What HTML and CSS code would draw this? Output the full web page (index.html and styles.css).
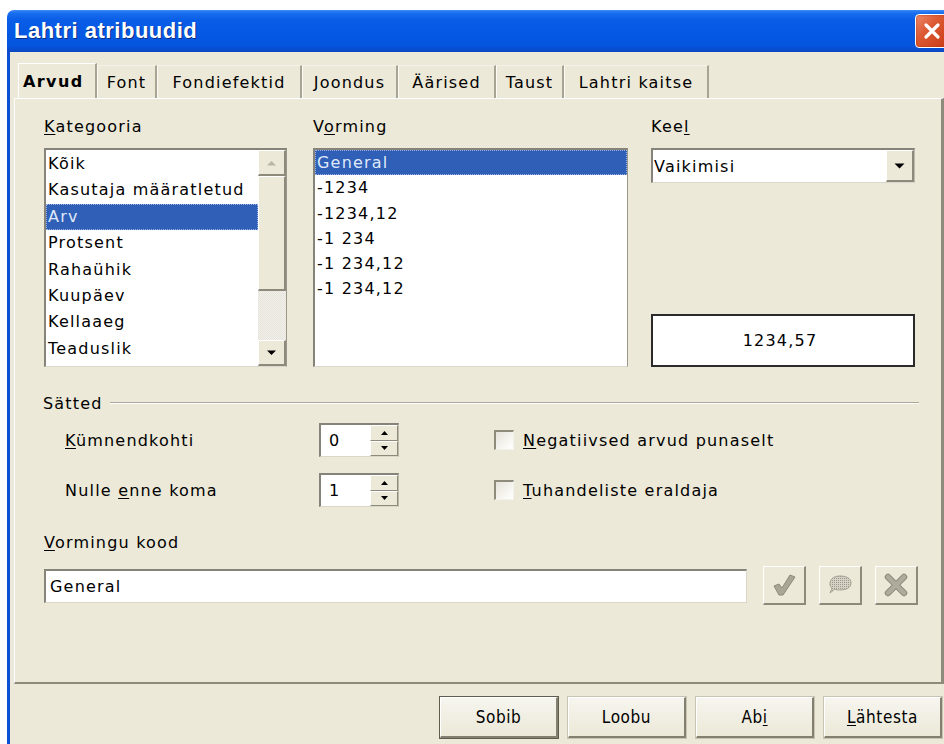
FILE: index.html
```html
<!DOCTYPE html>
<html lang="et">
<head>
<meta charset="utf-8">
<title>Lahtri atribuudid</title>
<link rel="stylesheet" href="styles.css">
</head>
<body>
<div class="window">
  <div class="titlebar">
    <span class="title">Lahtri atribuudid</span>
    <span class="close-btn" aria-label="Sulge">
      <svg width="22" height="22" viewBox="0 0 22 22"><path d="M5 5 L17 17 M17 5 L5 17" stroke="#fff" stroke-width="3.2" stroke-linecap="round"/></svg>
    </span>
  </div>

  <div class="client">
    <div class="tabs">
      <div class="tab active">Arvud</div>
      <div class="tab">Font</div>
      <div class="tab">Fondiefektid</div>
      <div class="tab">Joondus</div>
      <div class="tab">Äärised</div>
      <div class="tab">Taust</div>
      <div class="tab">Lahtri kaitse</div>
    </div>

    <div class="panel">
      <div class="top-row">
        <div class="col col-cat">
          <div class="label"><u>K</u>ategooria</div>
          <div class="listbox">
            <ul class="items rows-cat">
              <li>Kõik</li>
              <li>Kasutaja määratletud</li>
              <li class="sel">Arv</li>
              <li>Protsent</li>
              <li>Rahaühik</li>
              <li>Kuupäev</li>
              <li>Kellaaeg</li>
              <li>Teaduslik</li>
            </ul>
            <div class="vscroll">
              <div class="sb-btn">
                <svg width="11" height="6" viewBox="0 0 11 6"><path d="M1 5.5 L5.5 1 L10 5.5 Z" fill="#b9b6a8"/></svg>
              </div>
              <div class="sb-track"><div class="sb-thumb"></div></div>
              <div class="sb-btn">
                <svg width="11" height="6" viewBox="0 0 11 6"><path d="M1 0.5 L5.5 5 L10 0.5 Z" fill="#000"/></svg>
              </div>
            </div>
          </div>
        </div>

        <div class="col col-fmt">
          <div class="label">V<u>o</u>rming</div>
          <div class="listbox">
            <ul class="items rows-fmt">
              <li class="sel">General</li>
              <li>-1234</li>
              <li>-1234,12</li>
              <li>-1 234</li>
              <li>-1 234,12</li>
              <li>-1 234,12</li>
            </ul>
          </div>
        </div>

        <div class="col col-lang">
          <div class="label">Kee<u>l</u></div>
          <div class="combo">
            <span class="combo-val">Vaikimisi</span>
            <span class="combo-btn">
              <svg width="11" height="6" viewBox="0 0 11 6"><path d="M0.5 0.5 L5.5 5.5 L10.5 0.5 Z" fill="#000"/></svg>
            </span>
          </div>
          <div class="preview">1234,57</div>
        </div>
      </div>

      <div class="group-head">
        <span class="group-title">Sätted</span>
        <span class="rule"></span>
      </div>

      <div class="settings">
        <span class="set-label"><u>K</u>ümnendkohti</span>
        <div class="spin">
          <span class="spin-val">0</span>
          <span class="spin-btns">
            <span class="spin-b"><svg width="7" height="4" viewBox="0 0 7 4"><path d="M0 4 L3.5 0 L7 4 Z" fill="#000"/></svg></span>
            <span class="spin-b"><svg width="7" height="4" viewBox="0 0 7 4"><path d="M0 0 L3.5 4 L7 0 Z" fill="#000"/></svg></span>
          </span>
        </div>
        <label class="check"><span class="box"></span><span><u>N</u>egatiivsed arvud punaselt</span></label>

        <span class="set-label">Nulle <u>e</u>nne koma</span>
        <div class="spin">
          <span class="spin-val">1</span>
          <span class="spin-btns">
            <span class="spin-b"><svg width="7" height="4" viewBox="0 0 7 4"><path d="M0 4 L3.5 0 L7 4 Z" fill="#000"/></svg></span>
            <span class="spin-b"><svg width="7" height="4" viewBox="0 0 7 4"><path d="M0 0 L3.5 4 L7 0 Z" fill="#000"/></svg></span>
          </span>
        </div>
        <label class="check"><span class="box"></span><span><u>T</u>uhandeliste eraldaja</span></label>
      </div>

      <div class="label label-code"><u>V</u>ormingu kood</div>
      <div class="code-row">
        <div class="code-input">General</div>
        <span class="tool-btn">
          <svg width="26" height="26" viewBox="0 0 26 26">
            <path d="M3 14 L8 12 L11 16 L19 3 L24 5 L12 23 L8 23 Z" fill="#a9a696" stroke="#8d8a7b" stroke-width="1" stroke-linejoin="round"/>
          </svg>
        </span>
        <span class="tool-btn">
          <svg width="28" height="26" viewBox="0 0 28 26">
            <defs>
              <pattern id="dots" width="2" height="2" patternUnits="userSpaceOnUse">
                <rect width="2" height="2" fill="#d6d3c6"/>
                <rect width="1" height="1" fill="#9c998a"/>
              </pattern>
            </defs>
            <path d="M4 12 C4 6 9 4 14 4 C20 4 25 6 25 11 C25 16 20 18 14 18 C12 18 10 18 9 17 L4 21 L6 16 C4.5 15 4 14 4 12 Z" fill="url(#dots)" stroke="#a5a293" stroke-width="1"/>
          </svg>
        </span>
        <span class="tool-btn">
          <svg width="26" height="26" viewBox="0 0 26 26">
            <path d="M5 5 L21 21 M21 5 L5 21" stroke="#8f8c7d" stroke-width="6.5" stroke-linecap="round"/>
            <path d="M5 5 L21 21 M21 5 L5 21" stroke="#aeab9c" stroke-width="4.5" stroke-linecap="round"/>
          </svg>
        </span>
      </div>
    </div>

    <div class="footer">
      <span class="btn default">Sobib</span>
      <span class="btn">Loobu</span>
      <span class="btn">Ab<u>i</u></span>
      <span class="btn"><u>L</u>ähtesta</span>
    </div>
  </div>
</div>
</body>
</html>
```

FILE: styles.css
```css
* {
  box-sizing: border-box;
}

html,
body {
  margin: 0;
  height: 100%;
}

body {
  background: #fff;
  overflow: hidden;
  font-family: "DejaVu Sans", "Noto Sans", sans-serif;
  font-size: 16px;
  letter-spacing: 1.2px;
  color: #000;
}

u {
  text-decoration: underline;
  text-underline-offset: 2px;
}

/* ---- window frame ---- */
.window {
  margin: 10px 0 0 7px;
  width: 952px;
  height: 740px;
  display: flex;
  flex-direction: column;
}

.titlebar {
  flex: none;
  height: 42px;
  display: flex;
  align-items: center;
  padding: 0 11px 0 7px;
  border-radius: 7px 0 0 0;
  background: linear-gradient(to bottom,
    #3d8bf5 0%, #1a6ef0 7%, #085ce6 25%, #0458e4 60%,
    #0555de 85%, #0a47c2 100%);
}

.title {
  font-family: "Liberation Sans", Arial, sans-serif;
  font-weight: bold;
  font-size: 22px;
  letter-spacing: 0.5px;
  color: #fff;
  text-shadow: 1px 1px 0 #0b2f86;
}

.close-btn {
  margin-left: auto;
  width: 33px;
  height: 34px;
  display: flex;
  align-items: center;
  justify-content: center;
  border: 1px solid #fff;
  border-radius: 4px;
  background: linear-gradient(135deg, #eb8a6b 0%, #dd5a33 40%, #c93c17 100%);
  box-shadow: inset 0 0 2px #a82a0c;
}

.client {
  flex: 1;
  background: #ece9d8;
  border-left: 3px solid #0b4fd4;
  padding: 11px 0 0 4px;
  display: flex;
  flex-direction: column;
}

/* ---- tab strip ---- */
.tabs {
  display: grid;
  grid-template-columns: 79px 60px 145px 96px 98px 68px 145px;
  height: 35px;
  margin-left: 4px;
}

.tab {
  margin-top: 2px;
  display: flex;
  align-items: center;
  justify-content: center;
  border-left: 1px solid #fbfaf6;
  border-right: 2px solid #a7a494;
  border-top: 1px solid #f3f1e8;
  white-space: nowrap;
  letter-spacing: 1.2px;
}

.tab.active {
  margin-top: 0;
  font-weight: bold;
  letter-spacing: 1.4px;
  justify-content: flex-start;
  padding-left: 4px;
  border-left: 1px solid #fff;
  border-top: 1px solid #fff;
}

/* ---- tab page ---- */
.panel {
  width: 930px;
  height: 586px;
  border-top: 1px solid #fff;
  border-left: 1px solid #fff;
  border-right: 3px solid #8e8b7d;
  border-bottom: 2px solid #8e8b7d;
  padding: 18px 0 0 29px;
}

.label {
  height: 20px;
  line-height: 20px;
  margin-bottom: 11px;
  white-space: nowrap;
}

.top-row {
  display: flex;
  align-items: stretch;
}

.col {
  display: flex;
  flex-direction: column;
}

.col-cat {
  width: 243px;
}

.col-fmt {
  width: 315px;
  margin-left: 26px;
}

.col-lang {
  width: 264px;
  margin-left: 23px;
}

.listbox {
  height: 219px;
  display: flex;
  background: #fff;
  border-top: 2px solid #86837a;
  border-left: 2px solid #86837a;
  border-bottom: 1px solid #d9d6ca;
  border-right: 1px solid #9a978a;
}

.items {
  flex: 1;
  list-style: none;
  margin: 0;
  padding: 1px 0 0 0;
  white-space: nowrap;
}

.items li {
  padding-left: 2px;
}

.rows-cat li {
  height: 26.4px;
  line-height: 26.4px;
}

.rows-fmt {
  padding-top: 0;
}

.rows-fmt li {
  height: 25.3px;
  line-height: 25.3px;
}

.items li.sel {
  background: #2f5fb6;
  color: #dfe8fb;
  outline: 1px dotted #9bb3e3;
  outline-offset: -1px;
}

/* scrollbar */
.vscroll {
  width: 28px;
  display: flex;
  flex-direction: column;
  background: repeating-conic-gradient(#f1f0ea 0 25%, #e6e4da 0 50%) 0 0 / 2px 2px;
}

.sb-btn,
.sb-thumb {
  background: #ece9d8;
  border-top: 1px solid #fff;
  border-left: 1px solid #fff;
  border-right: 2px solid #8d8a7c;
  border-bottom: 2px solid #8d8a7c;
}

.sb-btn {
  height: 26px;
  display: flex;
  align-items: center;
  justify-content: center;
}

.sb-track {
  flex: 1;
}

.sb-thumb {
  height: 115px;
}

/* language combo + preview */
.combo {
  height: 35px;
  display: flex;
  align-items: stretch;
  background: #fff;
  border-top: 2px solid #86837a;
  border-left: 2px solid #86837a;
  border-bottom: 1px solid #d9d6ca;
  border-right: 1px solid #bdb9ab;
}

.combo-val {
  flex: 1;
  display: flex;
  align-items: center;
  padding-left: 1px;
}

.combo-btn {
  width: 28px;
  display: flex;
  align-items: center;
  justify-content: center;
  background: #ece9d8;
  border-top: 1px solid #fff;
  border-left: 1px solid #fff;
  border-right: 2px solid #8d8a7c;
  border-bottom: 2px solid #8d8a7c;
}

.preview {
  margin-top: auto;
  height: 53px;
  display: flex;
  align-items: center;
  justify-content: center;
  background: #fff;
  border: 2px solid #2b2b2b;
  padding-right: 6px;
}

/* ---- settings group ---- */
.group-head {
  display: flex;
  align-items: center;
  height: 20px;
  margin-top: 26px;
  padding-right: 22px;
}

.group-title {
  margin-left: -1px;
}

.rule {
  flex: 1;
  margin-left: 7px;
  height: 2px;
  border-top: 1px solid #aca899;
  border-bottom: 1px solid #fff;
}

.settings {
  display: grid;
  grid-template-columns: 254px 175px auto;
  grid-auto-rows: 34px;
  row-gap: 16px;
  align-items: center;
  margin-top: 10px;
  padding-left: 21px;
}

.spin {
  width: 80px;
  height: 34px;
  display: flex;
  background: #fff;
  border-top: 2px solid #86837a;
  border-left: 2px solid #86837a;
  border-bottom: 1px solid #d9d6ca;
  border-right: 1px solid #bdb9ab;
}

.spin-val {
  flex: 1;
  display: flex;
  align-items: center;
  padding-left: 8px;
}

.spin-btns {
  width: 28px;
  display: flex;
  flex-direction: column;
}

.spin-b {
  flex: 1;
  display: flex;
  align-items: center;
  justify-content: center;
  background: #ece9d8;
  border-top: 1px solid #fff;
  border-left: 1px solid #fff;
  border-right: 1px solid #8d8a7c;
  border-bottom: 1px solid #8d8a7c;
}

.check {
  display: flex;
  align-items: center;
  gap: 9px;
  white-space: nowrap;
}

.box {
  width: 20px;
  height: 20px;
  background: linear-gradient(135deg, #e4e2d8 0%, #f6f5f0 60%, #fff 100%);
  border-top: 2px solid #8e8b7d;
  border-left: 2px solid #8e8b7d;
  border-bottom: 1px solid #f2f1ea;
  border-right: 1px solid #f2f1ea;
}

/* ---- format code ---- */
.label-code {
  margin-top: 26px;
  margin-bottom: 13px;
}

.code-row {
  display: flex;
  align-items: center;
}

.code-input {
  width: 703px;
  height: 34px;
  display: flex;
  align-items: center;
  padding-left: 4px;
  background: #fff;
  border-top: 2px solid #86837a;
  border-left: 2px solid #86837a;
  border-bottom: 1px solid #d9d6ca;
  border-right: 1px solid #d9d6ca;
}

.tool-btn {
  width: 43px;
  height: 39px;
  margin-left: 13px;
  display: flex;
  align-items: center;
  justify-content: center;
  background: #ece9d8;
  border-top: 1px solid #fff;
  border-left: 1px solid #fff;
  border-right: 2px solid #8d8a7c;
  border-bottom: 2px solid #8d8a7c;
}

.code-input + .tool-btn {
  margin-left: 16px;
}

/* ---- dialog buttons ---- */
.footer {
  display: flex;
  justify-content: flex-end;
  gap: 10px;
  padding: 13px 0 0 0;
  width: 928px;
}

.btn {
  width: 118px;
  height: 41px;
  display: flex;
  align-items: center;
  justify-content: center;
  font-family: "DejaVu Sans Condensed", "DejaVu Sans", sans-serif;
  font-size: 17px;
  font-stretch: condensed;
  letter-spacing: 0.6px;
  background: linear-gradient(to bottom, #f6f5ef 0%, #ece9d8 100%);
  border-top: 1px solid #fff;
  border-left: 1px solid #fff;
  border-right: 2px solid #857f6f;
  border-bottom: 2px solid #857f6f;
  box-shadow: 0 0 0 1px #c9c5b5;
}

.btn.default {
  box-shadow: 0 0 0 1px #5f5c50;
}
```
